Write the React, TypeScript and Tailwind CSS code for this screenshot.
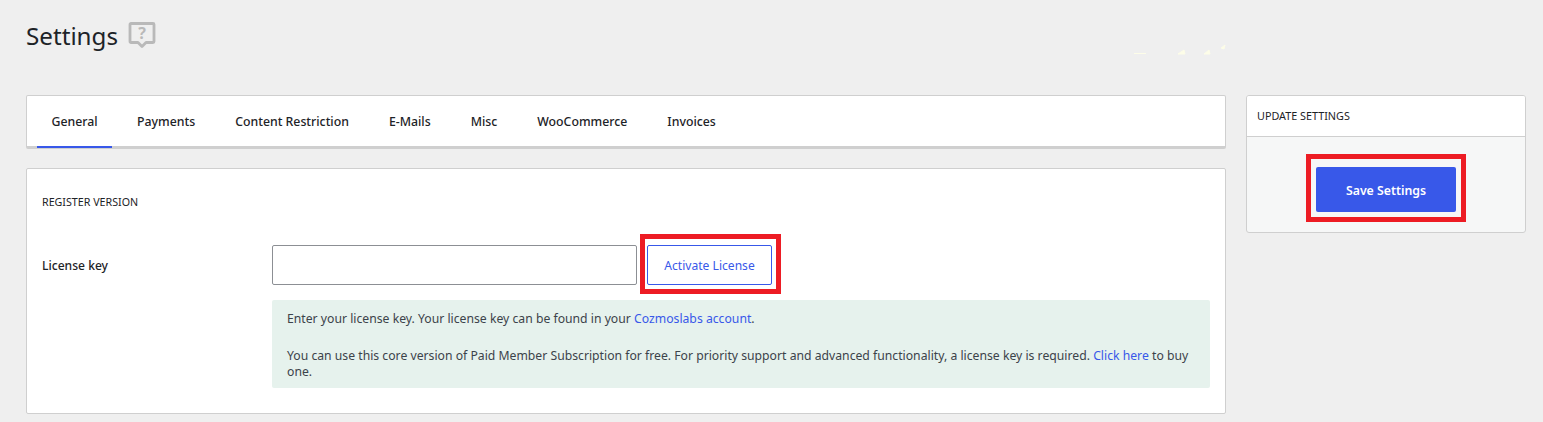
const font = { fontFamily: '"Noto Sans", "Open Sans", sans-serif' };

const tabs = ["Payments", "Content Restriction", "E-Mails", "Misc", "WooCommerce", "Invoices"];

function HelpIcon() {
  return (
    <svg width="28" height="29" viewBox="0 0 28 29" fill="none" className="mt-[1px] ml-[10px]">
      <path d="M3 3.500h22a1 1 0 0 1 1 1v17a1 1 0 0 1-1 1h-7l-4 4-4-4H3a1 1 0 0 1-1-1v-17a1 1 0 0 1 1-1z" stroke="#b9b9b9" strokeWidth="2.800" strokeLinejoin="round" />
      <text x="14" y="19" textAnchor="middle" fontSize="16" fontWeight="700" fill="#b9b9b9" fontFamily="Noto Sans, sans-serif">?</text>
    </svg>
  );
}

export default function App() {
  return (
    <div style={font} className="relative h-[422px] w-[1543px] overflow-hidden bg-[#efefef] text-[#1d2327]">
      <svg width="110" height="14" viewBox="0 0 110 14" className="absolute left-[1118px] top-[43px]">
        <path d="M16 10.500h12M60 11l6-4 1 4zM86 11l5-4 1 4zM103 5l4-3-1 4z" stroke="#fdfde8" strokeWidth="1" fill="#fdfde8" />
      </svg>

      <div className="flex h-[95px] items-start pl-[26px] pt-[19px]">
        <h1 className="text-[24.200px] leading-[34px] font-normal">Settings</h1>
        <HelpIcon />
      </div>

      <div className="flex items-start gap-[20px] pl-[26px]">
        <div className="flex w-[1200px] flex-col gap-[19px]">
          <nav className="flex h-[54px] rounded-[2px] border border-[#cfcfcf] border-b-[3px] bg-white pl-[10px] text-[12.300px] font-medium">
            <div className="mb-[-2px] flex h-[52px] w-[75px] items-center justify-center border-b-2 border-[#3858e9] pt-[2px]">General</div>
            <div className="ml-[25px] flex h-[50px] items-center gap-[40px] pt-[2px]">
              {tabs.map((t) => (
                <div key={t}>{t}</div>
              ))}
            </div>
          </nav>

          <section className="h-[246px] rounded-[2px] border border-[#cfcfcf] bg-white px-[15px] pt-[25px]">
            <h2 className="text-[10.700px] leading-[16px] font-normal">REGISTER VERSION</h2>
            <div className="mt-[35px] flex items-start">
              <label className="w-[230px] pt-[11px] text-[12.100px] leading-[20px] font-medium">License key</label>
              <div className="flex w-[938px] flex-col">
                <div className="flex items-center">
                  <input className="h-[40px] w-[365px] rounded-[2px] border border-[#8c8f94] bg-white" />
                  <div className="relative ml-[10px]">
                    <button className="h-[40px] w-[125px] rounded-[2px] border border-[#3858e9] bg-white pt-[2px] text-[12.100px] text-[#3858e9]">
                      Activate License
                    </button>
                    <div className="pointer-events-none absolute top-[-11px] right-[-9px] bottom-[-9px] left-[-7px] border-[5px] border-[#ed1c24]" />
                  </div>
                </div>
                <div className="mt-[15px] h-[88px] rounded-[2px] bg-[#e6f2ed] px-[15px] pt-[9px] text-[12.210px] leading-[20px] text-[#3c434a]">
                  <p>
                    Enter your license key. Your license key can be found in your{" "}
                    <a className="text-[#3858e9]">Cozmoslabs account</a>.
                  </p>
                  <p className="mt-[19px] leading-[16px]">
                    You can use this core version of Paid Member Subscription for free. For priority support and advanced functionality, a license key is required.{" "}
                    <a className="text-[#3858e9]">Click here</a> to buy one.
                  </p>
                </div>
              </div>
            </div>
          </section>
        </div>

        <aside className="w-[280px] overflow-hidden rounded-[3px] border border-[#cfcfcf] bg-[#f6f7f7]">
          <div className="flex h-[41px] items-center border-b border-[#cfcfcf] bg-white px-[10px] text-[10.800px]">UPDATE SETTINGS</div>
          <div className="flex h-[95px] items-start justify-center pt-[30px]">
            <div className="relative">
              <button className="h-[45px] w-[140px] rounded-[2px] bg-[#3858e9] pt-[3px] text-[12.300px] font-semibold text-white">Save Settings</button>
              <div className="pointer-events-none absolute top-[-13px] right-[-10px] bottom-[-10px] left-[-10px] border-[5px] border-[#ed1c24]" />
            </div>
          </div>
        </aside>
      </div>
    </div>
  );
}
